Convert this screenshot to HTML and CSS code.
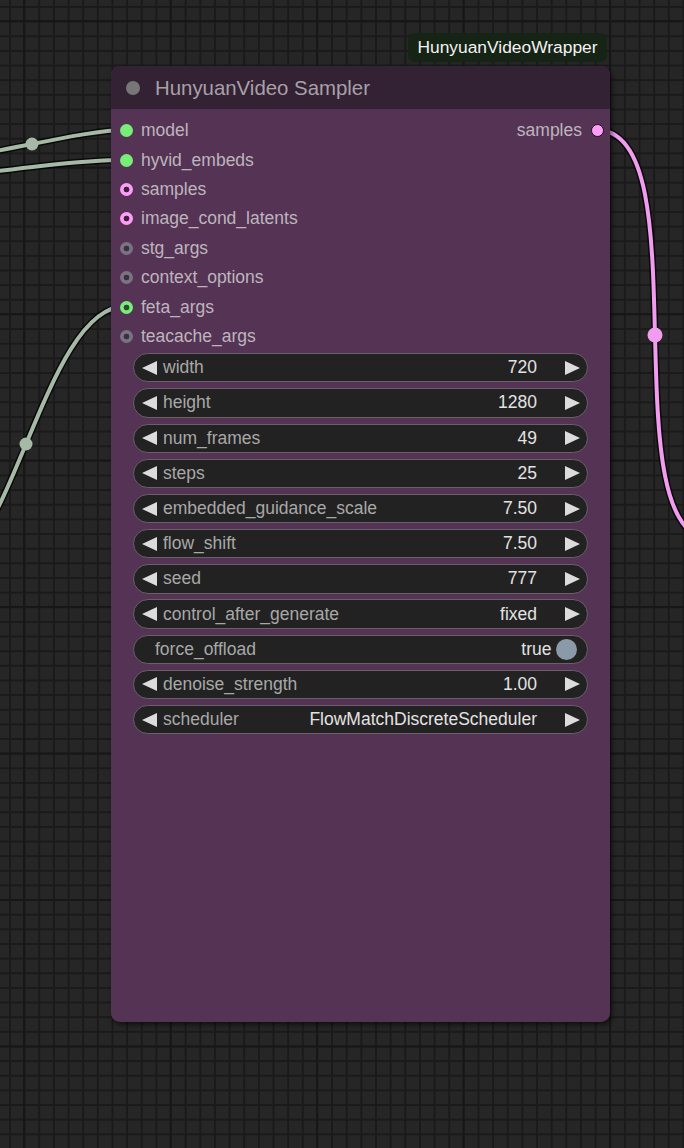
FILE: index.html
```html
<!DOCTYPE html>
<html>
<head>
<meta charset="utf-8">
<link rel="stylesheet" href="styles.css">
</head>
<body>
<div class="canvas">
  <svg class="wires" width="684" height="1148" viewBox="0 0 684 1148">
    <g class="outline">
      <path d="M -62 158 C -15 158, 79 130, 126 130"/>
      <path d="M -250 198 C -156 198, 32 160, 126 160"/>
      <path d="M -74 582 C 11 582, 41 306, 126 306"/>
      <path d="M 597 130 C 703 130, 607 540, 713 540"/>
    </g>
    <g class="green">
      <path d="M -62 158 C -15 158, 79 130, 126 130"/>
      <path d="M -250 198 C -156 198, 32 160, 126 160"/>
      <path d="M -74 582 C 11 582, 41 306, 126 306"/>
    </g>
    <path class="pink" d="M 597 130 C 703 130, 607 540, 713 540"/>
    <circle class="gdot" cx="32" cy="144" r="6.5"/>
    <circle class="gdot" cx="26" cy="444" r="6.5"/>
    <circle class="pdot" cx="655" cy="335" r="7.5"/>
  </svg>

  <div class="badge">HunyuanVideoWrapper</div>

  <div class="node">
    <div class="title">
      <span class="title-dot"></span>
      <span class="title-text">HunyuanVideo Sampler</span>
    </div>
    <div class="slots">
      <div class="inputs">
        <div class="slot"><span class="dot green-solid"></span><span class="slot-label">model</span></div>
        <div class="slot"><span class="dot green-solid"></span><span class="slot-label">hyvid_embeds</span></div>
        <div class="slot"><span class="dot pink-ring"></span><span class="slot-label">samples</span></div>
        <div class="slot"><span class="dot pink-ring"></span><span class="slot-label">image_cond_latents</span></div>
        <div class="slot"><span class="dot grey-ring"></span><span class="slot-label">stg_args</span></div>
        <div class="slot"><span class="dot grey-ring"></span><span class="slot-label">context_options</span></div>
        <div class="slot"><span class="dot green-ring"></span><span class="slot-label">feta_args</span></div>
        <div class="slot"><span class="dot grey-ring"></span><span class="slot-label">teacache_args</span></div>
      </div>
      <div class="outputs">
        <div class="slot out"><span class="slot-label">samples</span><span class="dot pink-solid"></span></div>
      </div>
    </div>
    <div class="widgets">
      <div class="widget"><span class="arrow-l"></span><span class="w-label">width</span><span class="w-value">720</span><span class="arrow-r"></span></div>
      <div class="widget"><span class="arrow-l"></span><span class="w-label">height</span><span class="w-value">1280</span><span class="arrow-r"></span></div>
      <div class="widget"><span class="arrow-l"></span><span class="w-label">num_frames</span><span class="w-value">49</span><span class="arrow-r"></span></div>
      <div class="widget"><span class="arrow-l"></span><span class="w-label">steps</span><span class="w-value">25</span><span class="arrow-r"></span></div>
      <div class="widget"><span class="arrow-l"></span><span class="w-label">embedded_guidance_scale</span><span class="w-value">7.50</span><span class="arrow-r"></span></div>
      <div class="widget"><span class="arrow-l"></span><span class="w-label">flow_shift</span><span class="w-value">7.50</span><span class="arrow-r"></span></div>
      <div class="widget"><span class="arrow-l"></span><span class="w-label">seed</span><span class="w-value">777</span><span class="arrow-r"></span></div>
      <div class="widget"><span class="arrow-l"></span><span class="w-label">control_after_generate</span><span class="w-value">fixed</span><span class="arrow-r"></span></div>
      <div class="widget toggle"><span class="w-label">force_offload</span><span class="w-value">true</span><span class="knob"></span></div>
      <div class="widget"><span class="arrow-l"></span><span class="w-label">denoise_strength</span><span class="w-value">1.00</span><span class="arrow-r"></span></div>
      <div class="widget"><span class="arrow-l"></span><span class="w-label">scheduler</span><span class="w-value">FlowMatchDiscreteScheduler</span><span class="arrow-r"></span></div>
    </div>
  </div>
</div>
</body>
</html>
```
FILE: styles.css
```css
html, body {
  margin: 0;
  padding: 0;
}
body {
  width: 684px;
  height: 1148px;
  overflow: hidden;
  font-family: "Liberation Sans", Arial, sans-serif;
}
.canvas {
  position: relative;
  width: 684px;
  height: 1148px;
  background-color: #262626;
  background-image:
    linear-gradient(to right, #171717 0 2px, transparent 2px),
    linear-gradient(to bottom, #171717 0 2px, transparent 2px),
    linear-gradient(to right, #1a1a1a 0 1.5px, transparent 1.5px),
    linear-gradient(to bottom, #1a1a1a 0 1.5px, transparent 1.5px);
  background-size: 146.5px 146.5px, 146.5px 146.5px, 14.65px 14.65px, 14.65px 14.65px;
  background-position: 23px 0, 0 20px, 9px 0, 0 6px;
  overflow: hidden;
}
.wires {
  position: absolute;
  left: 0;
  top: 0;
}
.wires path {
  fill: none;
}
.outline path {
  stroke: rgba(0, 0, 0, 0.75);
  stroke-width: 7;
}
.green path {
  stroke: #a6b8a6;
  stroke-width: 4;
}
.pink {
  stroke: #f29cf0;
  stroke-width: 4;
}
.gdot {
  fill: #a6b8a6;
}
.pdot {
  fill: #f29cf0;
}
.badge {
  position: absolute;
  left: 408px;
  top: 33px;
  width: 199px;
  height: 29px;
  border-radius: 7px;
  background: #152415;
  color: #f2f2f2;
  font-size: 17.4px;
  line-height: 29px;
  text-align: center;
}
.node {
  position: absolute;
  left: 111px;
  top: 66px;
  width: 499px;
  height: 956px;
  border-radius: 9px;
  background: #553355;
  box-shadow: 2px 3px 5px rgba(0, 0, 0, 0.55);
}
.title {
  height: 43px;
  border-radius: 9px 9px 0 0;
  background: #332233;
  display: flex;
  align-items: center;
}
.title-dot {
  width: 14px;
  height: 14px;
  border-radius: 50%;
  background: #777;
  margin-left: 15px;
}
.title-text {
  margin-left: 15px;
  color: #a8a0a8;
  font-size: 20.4px;
  margin-top: 1px;
}
.slots {
  display: flex;
  justify-content: space-between;
  padding-top: 7px;
}
.inputs, .outputs {
  display: flex;
  flex-direction: column;
}
.slot {
  height: 29.4px;
  display: flex;
  align-items: center;
  font-size: 17.5px;
  color: #bdb5bd;
}
.slot .dot {
  margin-left: 8.5px;
  margin-right: 8.5px;
}
.slot.out .dot {
  margin-left: 8.5px;
  margin-right: 6.5px;
}
.dot {
  width: 13px;
  height: 13px;
  border-radius: 50%;
  box-sizing: border-box;
  flex: none;
}
.green-solid {
  background: #77ee77;
}
.pink-solid {
  background: #ff9cf9;
  border: 1.5px solid #1a101a;
}
.pink-ring {
  background: radial-gradient(circle, #3a2238 0 2.6px, #ff9cf9 3.2px);
}
.green-ring {
  background: radial-gradient(circle, #2f4a2f 0 2.6px, #77ee77 3.2px);
}
.grey-ring {
  background: radial-gradient(circle, #3d2f42 0 2.6px, #7a7382 3.2px);
}
.widgets {
  display: flex;
  flex-direction: column;
  gap: 5.9px;
  padding: 2px 22px 0;
}
.widget {
  height: 29.3px;
  box-sizing: border-box;
  border: 1px solid #6a606a;
  border-radius: 15px;
  background: #222;
  display: flex;
  align-items: center;
  font-size: 17.5px;
  white-space: nowrap;
}
.arrow-l {
  width: 0;
  height: 0;
  border-top: 7.3px solid transparent;
  border-bottom: 7.3px solid transparent;
  border-right: 15px solid #dcdcdc;
  margin-left: 8px;
  flex: none;
}
.arrow-r {
  width: 0;
  height: 0;
  border-top: 7.3px solid transparent;
  border-bottom: 7.3px solid transparent;
  border-left: 15px solid #dcdcdc;
  margin-left: 28px;
  margin-right: 7px;
  flex: none;
}
.w-label {
  margin-left: 6px;
  color: #a8a8a8;
}
.w-value {
  margin-left: auto;
  color: #e2e2e2;
}
.toggle .w-label {
  margin-left: 21px;
}
.knob {
  width: 21px;
  height: 21px;
  border-radius: 50%;
  background: #8b9aa8;
  margin-left: 4px;
  margin-right: 10.5px;
  flex: none;
}
```
